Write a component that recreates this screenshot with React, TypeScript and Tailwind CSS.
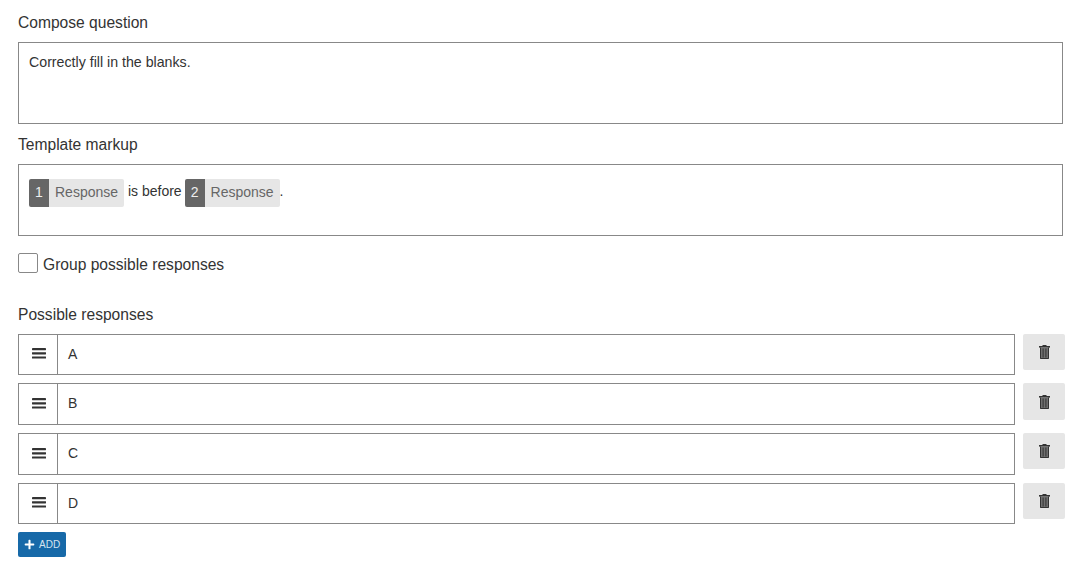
import { FaPlus } from "react-icons/fa";

const RESPONSES = [
  { label: "A", rowClass: "h-[41px]", btnClass: "h-9", textClass: "" },
  { label: "B", rowClass: "h-[42px]", btnClass: "h-[37px]", textClass: "pb-[2px]" },
  { label: "C", rowClass: "h-[42px]", btnClass: "h-9", textClass: "pb-[1px]" },
  { label: "D", rowClass: "h-[41px]", btnClass: "h-9", textClass: "" },
];

function BarsIcon() {
  return (
    <svg width="14" height="11" viewBox="0 0 14 11" className="text-[#333] mb-[2px] ml-[1px]">
      <rect x="0" y="0" width="14" height="2.2" rx="0.4" fill="currentColor" />
      <rect x="0" y="4.2" width="14" height="2.2" rx="0.4" fill="currentColor" />
      <rect x="0" y="8.4" width="14" height="2.2" rx="0.4" fill="currentColor" />
    </svg>
  );
}

function TrashIcon() {
  return (
    <svg width="11" height="14" viewBox="0 0 11 14">
      <rect x="3.5" y="0" width="4" height="1.5" fill="#333" />
      <rect x="0" y="1" width="11" height="1.6" fill="#333" />
      <path d="M1 2.5h9V13a1 1 0 0 1-1 1H2a1 1 0 0 1-1-1z" fill="#707070" />
      <path d="M1 2.5h1V13h7V2.5h1V13a1 1 0 0 1-1 1H2a1 1 0 0 1-1-1z" fill="#333" />
      <rect x="3.6" y="3.5" width="1" height="9" fill="#333" />
      <rect x="6.4" y="3.5" width="1" height="9" fill="#333" />
    </svg>
  );
}

function Blank({ n, className }: { n: number; className?: string }) {
  return (
    <span className={`inline-flex h-[28px] rounded-[2px] overflow-hidden align-top ${className ?? ""}`}>
      <span className="w-5 flex items-center justify-center bg-[#666] text-[#eee] text-[14px] pb-[2px]">{n}</span>
      <span className="px-[6px] flex items-center bg-[#e6e6e6] text-[#666] text-[14px] pb-[2px]">Response</span>
    </span>
  );
}

export default function App() {
  return (
    <div className="w-[1085px] h-[568px] bg-white overflow-hidden pl-[18px] pr-[20px] pt-[14px] text-[#333] font-['Liberation_Sans',Arial,sans-serif]">
      <div className="text-[15.6px] leading-[18px] mb-[10px]">Compose question</div>
      <div className="h-[82px] w-[1045px] border border-[#888] px-[10px] py-[10px] text-[14.2px] leading-[18px] mb-[12px]">
        Correctly fill in the blanks.
      </div>

      <div className="text-[15.6px] leading-[18px] mb-[10px]">Template markup</div>
      <div className="h-[72px] w-[1045px] border border-[#888] px-[10px] pt-[14px] text-[14px] leading-[24px] mb-[17px]">
        <Blank n={1} /> is before <Blank n={2} className="-ml-[1px]" />.
      </div>

      <label className="flex items-center h-5 mb-[33px]">
        <span className="w-5 h-5 border border-[#888] rounded-[2px] bg-white" />
        <span className="ml-[5px] text-[15.6px] leading-5 pt-[3px]">Group possible responses</span>
      </label>

      <div className="text-[15.6px] leading-[18px] mb-[10px]">Possible responses</div>
      {RESPONSES.map((r) => (
        <div key={r.label} className="flex gap-2 mb-2">
          <div className={`flex-1 flex border border-[#888] ${r.rowClass}`}>
            <div className="w-[39px] flex items-center justify-center border-r border-[#888]">
              <BarsIcon />
            </div>
            <div className={`flex-1 flex items-center px-[10px] text-[14px] ${r.textClass}`}>{r.label}</div>
          </div>
          <button className={`w-[42px] rounded-[2px] bg-[#e6e6e6] flex items-center justify-center ${r.btnClass}`}>
            <TrashIcon />
          </button>
        </div>
      ))}
      <button className="w-12 h-[25px] rounded-[2px] bg-[#1769a8] text-[#d5e4f0] flex items-center pl-[6px] gap-[4px] text-[10px]">
        <FaPlus size={11} className="text-white" />
        ADD
      </button>
    </div>
  );
}
